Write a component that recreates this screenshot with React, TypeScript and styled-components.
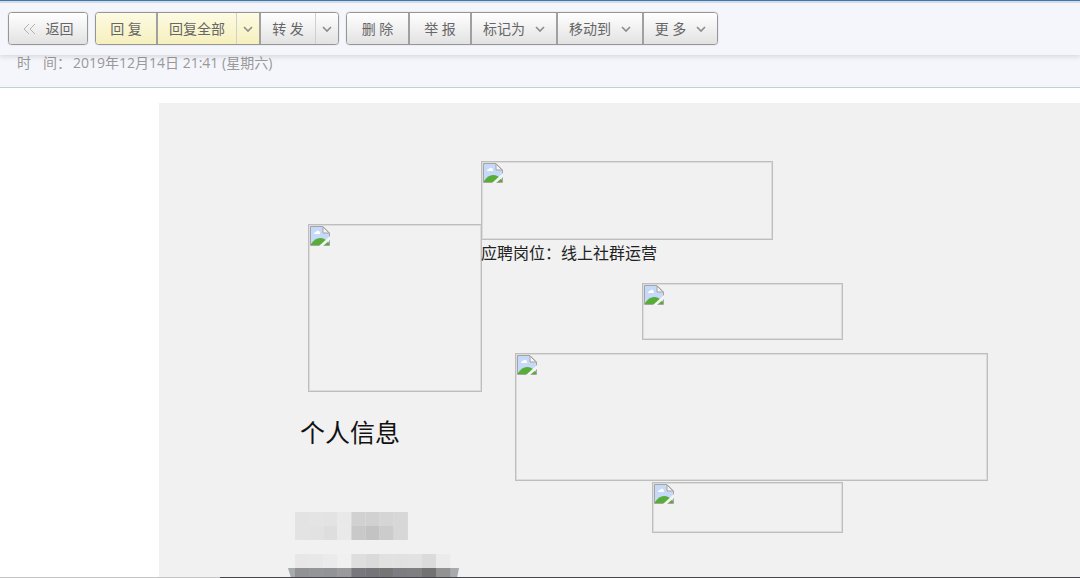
import React from "react";
import styled, { createGlobalStyle } from "styled-components";

const GlobalStyle = createGlobalStyle`
  *, *::before, *::after { box-sizing: border-box; }
  body {
    margin: 0;
    background: #ffffff;
    font-family: "Open Sans", "Noto Sans CJK SC", sans-serif;
    font-weight: 400;
  }
`;

const Page = styled.div`
  display: flex;
  flex-direction: column;
  height: 100vh;
  overflow: hidden;
`;

const Toolbar = styled.header`
  position: relative;
  z-index: 1;
  flex: none;
  display: flex;
  gap: 7px;
  padding: 11px 8px 10px;
  border-top: 1px solid #3a78b0;
  background: #f5f6fb;
  box-shadow: inset 0 2px 0 #d9dbe4, 0 2px 5px rgba(0, 0, 0, 0.12);
`;

const ButtonGroup = styled.div`
  display: flex;
  height: 33px;
  border: 1px solid #969696;
  border-radius: 4px;
  box-shadow: 0 0 1px #969696;
  overflow: hidden;
`;

const ToolButton = styled.button<{ $w: number; $tone?: "yellow"; $divider?: "strong" | "soft" }>`
  display: flex;
  align-items: center;
  justify-content: center;
  gap: 10px;
  width: ${(p) => p.$w}px;
  padding: 0;
  border: 0;
  border-left: ${(p) =>
    p.$divider === "strong" ? "2px solid #a0a0a0" : p.$divider === "soft" ? "1px solid #cfcfcf" : "0"};
  background: ${(p) =>
    p.$tone === "yellow"
      ? "linear-gradient(#fdfbe3, #f6f0bd)"
      : "linear-gradient(#ffffff, #e2e2e2)"};
  color: #666666;
  font: inherit;
  font-size: 14px;
  line-height: 20px;
  white-space: pre;
  cursor: pointer;
`;

const DateBand = styled.section`
  flex: none;
  display: flex;
  gap: 12px;
  height: 33px;
  padding: 0 17px;
  border-bottom: 1px solid #c3cedb;
  background: #f5f6fb;
  color: #999999;
  font-size: 14px;
  line-height: 16px;
`;

const DateValue = styled.time`
  margin-left: 2px;
`;

const Sheet = styled.main`
  flex: 1;
  display: flex;
  margin: 15px 0 0 159px;
  background: #f1f1f1;
`;

const ProfileColumn = styled.section`
  flex: none;
  display: flex;
  flex-direction: column;
  align-items: flex-start;
  width: 322px;
  padding: 121px 0 0 129px;
`;

const ContentColumn = styled.section`
  flex: none;
  display: flex;
  flex-direction: column;
  align-items: flex-start;
  padding-top: 58px;
`;

const Frame = styled.div<{ $w: number; $h: number; $left?: number; $top?: number }>`
  flex: none;
  width: ${(p) => p.$w}px;
  height: ${(p) => p.$h}px;
  margin: ${(p) => p.$top ?? 0}px 0 0 ${(p) => p.$left ?? 0}px;
  padding: 1px;
  border: 1px solid #bebebe;
  outline: 1px solid #dcdcdc;
  outline-offset: -2px;
  line-height: 0;
`;

const Position = styled.p`
  margin: 1px 0 18px;
  color: #222222;
  font-size: 16px;
  line-height: 24px;
`;

const Heading = styled.h2`
  margin: 22px 0 62px 12px;
  color: #111111;
  font-size: 25px;
  font-weight: 400;
  line-height: 36px;
`;

const MosaicArt = styled.svg`
  flex: none;
  display: block;
`;

const BottomEdge = styled.div`
  position: fixed;
  left: 0;
  right: 0;
  bottom: 0;
  height: 1px;
  background: linear-gradient(to right, #c4c4c4 220px, #45444a 220px);
`;

const Chevron = () => (
  <svg width="10" height="8" viewBox="0 0 10 8" fill="none" aria-hidden="true">
    <path d="M1 2 L5 6 L9 2" stroke="#8c8c8c" strokeWidth="1.6" />
  </svg>
);

const BackIcon = () => (
  <svg width="13" height="12" viewBox="0 0 13 12" fill="none" aria-hidden="true">
    <path d="M6 1 L1 6 L6 11 M12 1 L7 6 L12 11" stroke="#b2b2b2" />
  </svg>
);

const BrokenImage = ({ label, ...size }: { label: string; $w: number; $h: number; $left?: number; $top?: number }) => (
  <Frame role="img" aria-label={label} {...size}>
    <svg width="20" height="20" viewBox="0 0 20 20" aria-hidden="true">
      <path d="M1 1 H13 L19 7 V19 H1 Z" fill="#c6d9f8" />
      <path d="M4 8 Q4 6 6 6 Q7 4 9 5 Q10 6 10 8 Z" fill="#ffffff" />
      <path d="M1 18 Q5 12 10 12 Q15 12 19 17 V19 H1 Z" fill="#58ad38" />
      <path d="M0.5 19.5 V0.5 H13 L19.5 7 V19.5 Z" fill="none" stroke="#a4a4a4" />
      <path d="M13 1 V7 H19 Z" fill="#f4f4f4" stroke="#a4a4a4" />
      <path d="M9 20 L20 10 V14 L13 20 Z" fill="#f4f4f4" />
    </svg>
  </Frame>
);

const mosaicRows = [
  { y: 0, h: 14, colors: ["#e3e3e3", "#e4e4e4", "#e3e3e3", "#e9e9e9", "#d1d1d1", "#d1d1d1", "#d5d5d5", "#d7d7d7"] },
  { y: 14, h: 14, colors: ["#e3e3e3", "#e2e2e2", "#dedede", "#e9e9e9", "#c9c9c9", "#c3c3c3", "#cccccc", "#d7d7d7"] },
  { y: 42, h: 14, colors: ["#e7e7e7", "#e8e8e8", "#ebebeb", "#f0f0f0", "#dedede", "#dadada", "#e1e1e1", "#e1e1e1", "#e2e2e2", "#dbdbdb", "#ebebeb"] },
  { y: 56, h: 10, colors: ["#929295", "#949598", "#929396", "#9a9a9d", "#77777d", "#747479", "#757575", "#7d7d81", "#7f7f82", "#727272", "#929292"] },
];

const Mosaic = () => (
  <MosaicArt width="172" height="66" viewBox="0 0 172 66" aria-hidden="true">
    <path d="M0 56 H171 L169 66 H3 Z" fill="#a7abae" />
    {mosaicRows.map((row) =>
      row.colors.map((color, i) => (
        <rect key={`${row.y}-${i}`} x={7 + i * 14.1} y={row.y} width="14.2" height={row.h} fill={color} />
      )),
    )}
  </MosaicArt>
);

export default function App() {
  return (
    <>
      <GlobalStyle />
      <Page>
        <Toolbar>
          <ButtonGroup>
            <ToolButton $w={78}><BackIcon />返回</ToolButton>
          </ButtonGroup>
          <ButtonGroup>
            <ToolButton $tone="yellow" $w={60}>回 复</ToolButton>
            <ToolButton $tone="yellow" $divider="strong" $w={80}>回复全部</ToolButton>
            <ToolButton $tone="yellow" $divider="soft" $w={23} aria-label="回复全部选项"><Chevron /></ToolButton>
            <ToolButton $divider="strong" $w={56}>转 发</ToolButton>
            <ToolButton $divider="soft" $w={23} aria-label="转发选项"><Chevron /></ToolButton>
          </ButtonGroup>
          <ButtonGroup>
            <ToolButton $w={61}>删 除</ToolButton>
            <ToolButton $divider="strong" $w={62}>举 报</ToolButton>
            <ToolButton $divider="strong" $w={86}>标记为<Chevron /></ToolButton>
            <ToolButton $divider="strong" $w={86}>移动到<Chevron /></ToolButton>
            <ToolButton $divider="strong" $w={75}>更 多<Chevron /></ToolButton>
          </ButtonGroup>
        </Toolbar>
        <DateBand>
          <span>时</span>
          <span>间：<DateValue dateTime="2019-12-14T21:41">2019年12月14日 21:41 (星期六)</DateValue></span>
        </DateBand>
        <Sheet>
          <ProfileColumn>
            <BrokenImage label="头像" $w={174} $h={168} $left={20} />
            <Heading>个人信息</Heading>
            <Mosaic />
          </ProfileColumn>
          <ContentColumn>
            <BrokenImage label="姓名" $w={292} $h={79} />
            <Position>应聘岗位：线上社群运营</Position>
            <BrokenImage label="标题" $w={201} $h={57} $left={161} />
            <BrokenImage label="经历" $w={473} $h={128} $left={34} $top={13} />
            <BrokenImage label="标题" $w={191} $h={51} $left={171} $top={1} />
          </ContentColumn>
        </Sheet>
        <BottomEdge />
      </Page>
    </>
  );
}
